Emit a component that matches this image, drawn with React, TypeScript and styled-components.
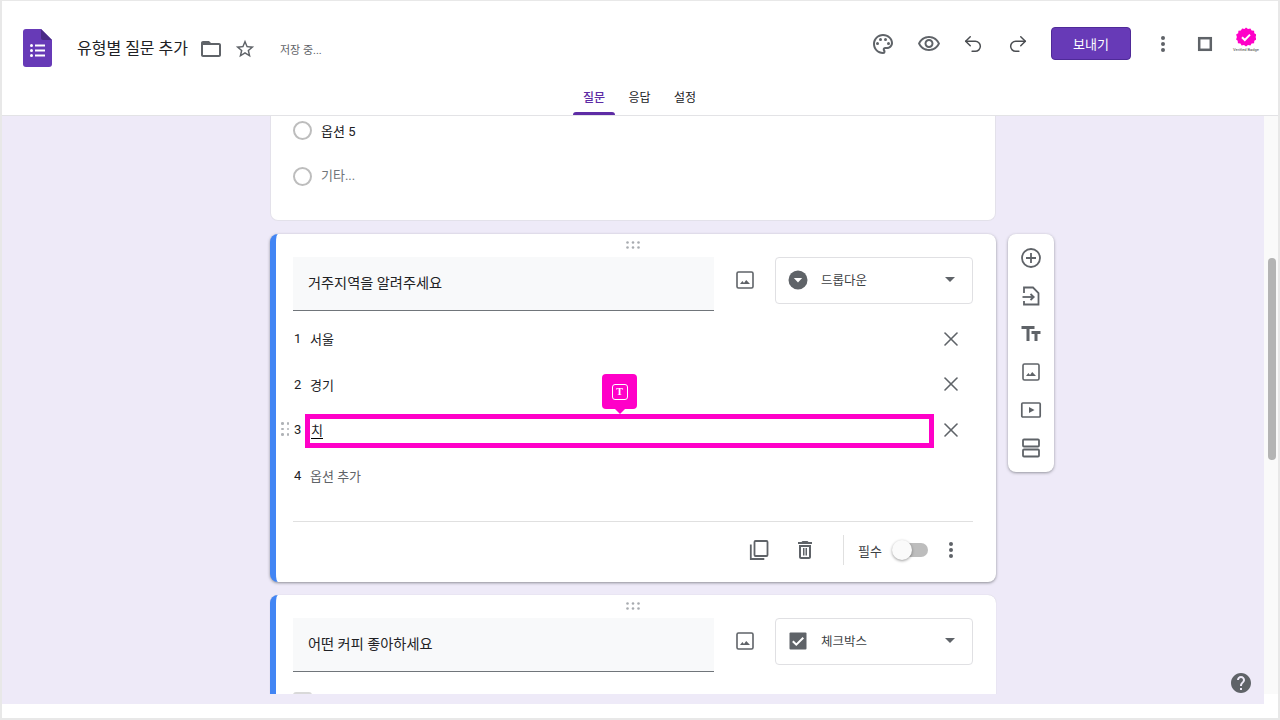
import React from 'react'
import styled, { createGlobalStyle } from 'styled-components'
import { X, Undo2, Redo2 } from 'lucide-react'

const GlobalStyle = createGlobalStyle`
  html, body {
    margin: 0;
    padding: 0;
    background: #fff;
  }
  * {
    box-sizing: border-box;
  }
  body {
    font-family: Roboto, "Noto Sans CJK KR", sans-serif;
    color: #202124;
  }
`

const Page = styled.div`
  width: 1280px;
  height: 720px;
  display: flex;
  flex-direction: column;
  overflow: hidden;
  background: #fff;
  border: 2px solid #e8e8e8;
  border-top-width: 1px;
`
const Header = styled.header`
  flex: 0 0 115px;
  display: flex;
  flex-direction: column;
  background: #fff;
  border-bottom: 1px solid #e3e3e6;
`
const TopRow = styled.div`
  flex: 0 0 84px;
  display: flex;
  align-items: center;
  padding: 0 16px 0 21px;
`
const LeftGroup = styled.div`
  display: flex;
  align-items: center;
  margin-top: 12px;
`
const RightGroup = styled.div`
  display: flex;
  align-items: center;
  margin-top: 1px;
  margin-left: auto;
`
const TitleIcon = styled.svg`
  width: 29px;
  height: 38px;
  flex: none;
  margin-right: 25px;
  margin-bottom: 3px;
`
const DocTitle = styled.div`
  font-size: 16px;
  line-height: 24px;
  color: #202124;
  white-space: nowrap;
  margin-right: 11px;
`
const Saving = styled.div`
  font-size: 11px;
  color: #5f6368;
  margin-left: 23px;
  white-space: nowrap;
`
const HeadIcon = styled.div<{ $w?: number; $ml?: number }>`
  width: ${p => p.$w ?? 24}px;
  height: 24px;
  margin-left: ${p => p.$ml ?? 0}px;
  display: flex;
  align-items: center;
  justify-content: center;
  color: #5f6368;
  flex: none;
  svg {
    display: block;
  }
`
const HistoryIcon = styled(HeadIcon)`
  color: #4a4d51;
`
const SendButton = styled.button`
  width: 80px;
  height: 33px;
  margin-left: 21px;
  background: #673ab7;
  border: 1px solid #4f2a98;
  border-radius: 4px;
  color: #fff;
  font: inherit;
  font-size: 13px;
  padding: 0;
`
const Avatar = styled.div`
  width: 32px;
  margin-left: 13px;
  display: flex;
  flex-direction: column;
  align-items: center;
  margin-top: -8px;
`
const AvatarText = styled.div`
  font-size: 4px;
  line-height: 5px;
  letter-spacing: 0;
  color: #444;
  white-space: nowrap;
`
const TabsRow = styled.nav`
  flex: 1;
  display: flex;
  justify-content: center;
  padding-right: 1px;
`
const Tab = styled.div<{ $active?: boolean }>`
  width: 45.5px;
  height: 100%;
  position: relative;
  text-align: center;
  font-size: 12px;
  line-height: 27px;
  color: ${p => (p.$active ? '#5e2ca5' : '#202124')};
  font-weight: ${p => (p.$active ? 500 : 400)};
  ${p =>
    p.$active &&
    `
    &::after {
      content: '';
      position: absolute;
      left: 2px;
      right: 2px;
      bottom: 0;
      height: 3px;
      border-radius: 3px 3px 0 0;
      background: #5e2ca5;
    }
  `}
`
const Body = styled.div`
  flex: 0 0 588px;
  display: flex;
`
const Canvas = styled.main`
  flex: 1;
  background: #eeeaf8;
  padding-bottom: 10px;
`
const Viewport = styled.div`
  height: 578px;
  overflow: hidden;
  display: grid;
  grid-template-columns: 1fr 726px 1fr;
  column-gap: 12px;
  align-items: start;
`
const Column = styled.div`
  grid-column: 2;
  display: flex;
  flex-direction: column;
`
const Scrollbar = styled.div`
  flex: 0 0 14px;
  height: 578px;
  background: #fafafa;
  padding: 142px 2px 0 4px;
`
const ScrollThumb = styled.div`
  height: 202px;
  border-radius: 4px;
  background: #b4b4b4;
`
const TopCard = styled.section`
  height: 105px;
  overflow: hidden;
  background: #fff;
  border: 1px solid #e3e1ea;
  border-top: none;
  border-radius: 0 0 8px 8px;
  padding-left: 22px;
  margin-bottom: 13px;
`
const RadioList = styled.div`
  margin-top: -9px;
`
const RadioRow = styled.div`
  height: 46px;
  display: flex;
  align-items: center;
  font-size: 13px;
`
const RadioLabel = styled.span<{ $muted?: boolean }>`
  color: ${p => (p.$muted ? '#70757a' : '#202124')};
  margin-bottom: ${p => (p.$muted ? 3 : 0)}px;
`
const RadioCircle = styled.span`
  width: 19px;
  height: 19px;
  border: 2px solid #bdbdbd;
  border-radius: 50%;
  margin-right: 9px;
  flex: none;
`
const Card = styled.section<{ $height: number; $raised?: boolean }>`
  height: ${p => p.$height}px;
  position: relative;
  background: #fff;
  border-left: 6px solid #4285f4;
  border-radius: 8px;
  padding: 0 23px 0 17px;
  box-shadow: ${p =>
    p.$raised
      ? '0 1px 3px rgba(60, 64, 67, 0.55)'
      : '0 0 1px rgba(60, 64, 67, 0.25)'};
  flex: none;
`
const ClippedCard = styled(Card)`
  border-radius: 8px 8px 0 0;
  margin-top: 13px;
`
const DragBar = styled.div`
  height: 23px;
  display: flex;
  justify-content: center;
  padding-top: 7px;
`
const QuestionHead = styled.div`
  display: flex;
  align-items: flex-start;
`
const QuestionField = styled.div`
  width: 421px;
  height: 54px;
  background: #f8f9fa;
  border-bottom: 1px solid #70757a;
  display: flex;
  align-items: center;
  padding-left: 15px;
  padding-bottom: 4px;
  font-size: 14.2px;
  color: #202124;
`
const ImageButton = styled.div`
  width: 61px;
  height: 46px;
  display: flex;
  align-items: center;
  justify-content: center;
  color: #5f6368;
`
const TypeSelect = styled.div`
  width: 198px;
  height: 47px;
  border: 1px solid #e0e0e3;
  border-radius: 4px;
  display: flex;
  align-items: center;
  padding: 0 17px 2px 12px;
  font-size: 12.5px;
  color: #3c4043;
`
const TypeIcon = styled.div`
  width: 20px;
  height: 20px;
  margin-right: 13px;
  flex: none;
`
const TypeLabel = styled.div`
  flex: 1;
`
const Caret = styled.div`
  width: 0;
  height: 0;
  border-left: 5px solid transparent;
  border-right: 5px solid transparent;
  border-top: 5px solid #5f6368;
`
const Options = styled.div`
  margin-top: 5px;
`
const OptionRow = styled.div`
  height: 45.5px;
  position: relative;
  display: flex;
  align-items: center;
  font-size: 13px;
  color: #202124;
`
const OptionNumber = styled.div`
  width: 17px;
  padding-left: 1px;
  font-size: 13px;
`
const OptionText = styled.div<{ $muted?: boolean }>`
  flex: 1;
  font-size: 13px;
  color: ${p => (p.$muted ? '#5f6368' : '#202124')};
`
const RemoveButton = styled.div`
  width: 24px;
  height: 24px;
  margin-right: 10px;
  color: #5f6368;
`
const Typed = styled.span`
  border-bottom: 1px solid #000;
  margin-left: 1px;
  color: #202124;
`
const RowHandle = styled.div`
  position: absolute;
  left: -12px;
  top: 15px;
  display: grid;
  grid-template-columns: repeat(2, 2.5px);
  gap: 3px;
`
const Dot = styled.span`
  width: 2.5px;
  height: 2.5px;
  border-radius: 50%;
  background: #b0b3b7;
`
const Highlight = styled.div`
  position: absolute;
  left: 12px;
  top: 7px;
  width: 629px;
  height: 34px;
  border: 5px solid #ff00c8;
  pointer-events: none;
`
const Bubble = styled.div`
  position: absolute;
  left: 309px;
  top: -33px;
  width: 35px;
  height: 35px;
  background: #ff00c8;
  border-radius: 4px;
  display: flex;
  align-items: center;
  justify-content: center;
  &::after {
    content: '';
    position: absolute;
    left: 13px;
    bottom: -5px;
    border-left: 5px solid transparent;
    border-right: 5px solid transparent;
    border-top: 5px solid #ff00c8;
  }
`
const BubbleIcon = styled.div`
  width: 16px;
  height: 16px;
  border: 1.5px solid #fff;
  border-radius: 3px;
  color: #fff;
  font-family: "Liberation Serif", serif;
  font-weight: 700;
  font-size: 10px;
  line-height: 13px;
  text-align: center;
`
const Divider = styled.div`
  height: 1px;
  margin-top: 23px;
  background: #e0e0e0;
`
const CardFooter = styled.div`
  height: 58px;
  display: flex;
  align-items: center;
  justify-content: flex-end;
  padding: 0 10px 2px 0;
`
const FooterIcon = styled.div`
  width: 24px;
  height: 24px;
  margin-right: 22px;
  color: #5f6368;
`
const VerticalRule = styled.div`
  width: 1px;
  height: 30px;
  margin: 0 14px 0 4px;
  background: #e0e0e0;
`
const RequiredLabel = styled.div`
  font-size: 13px;
  color: #3c4043;
  margin-right: 10px;
`
const Toggle = styled.div`
  width: 36px;
  height: 20px;
  position: relative;
  margin-right: 11px;
  &::before {
    content: '';
    position: absolute;
    left: 3px;
    right: 0;
    top: 3px;
    height: 14px;
    border-radius: 7px;
    background: #bdbdbd;
  }
  &::after {
    content: '';
    position: absolute;
    left: 0;
    top: 0;
    width: 20px;
    height: 20px;
    border-radius: 50%;
    background: #fafafa;
    box-shadow: 0 1px 3px rgba(0, 0, 0, 0.4);
  }
`
const MoreIcon = styled.div`
  width: 24px;
  height: 24px;
  color: #5f6368;
`
const GhostCheckbox = styled.div`
  width: 19px;
  height: 19px;
  margin-top: 20px;
  border-radius: 3px;
  background: #d9d9d9;
`
const SideToolbar = styled.aside`
  grid-column: 3;
  justify-self: start;
  width: 46px;
  height: 238px;
  margin-top: 118px;
  padding: 5px 0;
  background: #fff;
  border-radius: 8px;
  box-shadow: 0 1px 3px rgba(60, 64, 67, 0.5);
  display: flex;
  flex-direction: column;
  align-items: center;
`
const ToolButton = styled.div`
  flex: 0 0 38px;
  display: flex;
  align-items: center;
  justify-content: center;
  color: #5f6368;
`
const BottomStrip = styled.div`
  flex: 1;
  background: #fff;
`
const HelpFab = styled.svg`
  position: fixed;
  left: 1229px;
  top: 671px;
  width: 24px;
  height: 24px;
  color: #5f6368;
`

type IconProps = { size?: number }

const Svg = ({ size = 24, children }: IconProps & { children: React.ReactNode }) => (
  <svg width={size} height={size} viewBox="0 0 24 24" fill="currentColor">
    {children}
  </svg>
)

const FormsLogo = () => (
  <TitleIcon viewBox="0 0 29 38">
    <path d="M18 0H3a3 3 0 0 0-3 3v32a3 3 0 0 0 3 3h23a3 3 0 0 0 3-3V11z" fill="#673ab7" />
    <path d="M18 0l11 11H20a2 2 0 0 1-2-2z" fill="#4a2a86" />
    <g fill="#fff">
      <circle cx="8.5" cy="16.5" r="1.5" />
      <circle cx="8.5" cy="21.5" r="1.5" />
      <circle cx="8.5" cy="26.5" r="1.5" />
      <rect x="12" y="15.5" width="10" height="2" />
      <rect x="12" y="20.5" width="10" height="2" />
      <rect x="12" y="25.5" width="10" height="2" />
    </g>
  </TitleIcon>
)
const FolderIcon = () => (
  <Svg>
    <path d="M20 6h-8l-2-2H4c-1.1 0-1.99.9-1.99 2L2 18c0 1.1.9 2 2 2h16c1.1 0 2-.9 2-2V8c0-1.1-.9-2-2-2zm0 12H4V8h16v10z" />
  </Svg>
)
const StarIcon = () => (
  <Svg size={22}>
    <path d="M22 9.24l-7.19-.62L12 2 9.19 8.63 2 9.24l5.46 4.73L5.82 21 12 17.27 18.18 21l-1.63-7.03L22 9.24zM12 15.4l-3.76 2.27 1-4.28-3.32-2.88 4.38-.38L12 6.1l1.71 4.04 4.38.38-3.32 2.88 1 4.28L12 15.4z" />
  </Svg>
)
const PaletteIcon = () => (
  <Svg>
    <path d="M12 22C6.49 22 2 17.51 2 12S6.49 2 12 2s10 4.04 10 9c0 3.31-2.69 6-6 6h-1.77c-.28 0-.5.22-.5.5 0 .12.05.23.13.33.41.47.64 1.06.64 1.67A2.5 2.5 0 0 1 12 22zm0-18c-4.41 0-8 3.59-8 8s3.59 8 8 8c.28 0 .5-.22.5-.5a.54.54 0 0 0-.14-.35c-.41-.46-.63-1.05-.63-1.65a2.5 2.5 0 0 1 2.5-2.5H16c2.21 0 4-1.79 4-4 0-3.86-3.59-7-8-7z" />
    <circle cx="6.5" cy="11.5" r="1.5" />
    <circle cx="9.5" cy="7.5" r="1.5" />
    <circle cx="14.5" cy="7.5" r="1.5" />
    <circle cx="17.5" cy="11.5" r="1.5" />
  </Svg>
)
const EyeIcon = () => (
  <Svg>
    <path d="M12 6c3.79 0 7.17 2.13 8.82 5.5C19.17 14.87 15.79 17 12 17s-7.17-2.13-8.82-5.5C4.83 8.13 8.21 6 12 6m0-2C7 4 2.73 7.11 1 11.5 2.73 15.89 7 19 12 19s9.27-3.11 11-7.5C21.27 7.11 17 4 12 4zm0 5c1.38 0 2.5 1.12 2.5 2.5S13.38 14 12 14s-2.5-1.12-2.5-2.5S10.62 9 12 9m0-2c-2.48 0-4.5 2.02-4.5 4.5S9.52 16 12 16s4.5-2.02 4.5-4.5S14.48 7 12 7z" />
  </Svg>
)
const KebabIcon = () => (
  <Svg>
    <circle cx="12" cy="6" r="2" />
    <circle cx="12" cy="12" r="2" />
    <circle cx="12" cy="18" r="2" />
  </Svg>
)
const SquareIcon = () => (
  <svg width="24" height="24" viewBox="0 0 24 24" fill="none" stroke="currentColor" strokeWidth="2.5">
    <rect x="6.2" y="6.2" width="11.6" height="11.6" />
  </svg>
)
const Badge = () => (
  <svg width="20" height="20" viewBox="0 0 20 20">
    <path
      fill="#ff00c8"
      d="M10 .6l2 1.5 2.4-.7 1.2 2.2 2.5.2.2 2.5 2.1 1.3-.8 2.4.8 2.4-2.1 1.3-.2 2.5-2.5.2-1.2 2.2-2.4-.7-2 1.5-2-1.5-2.4.7-1.2-2.2-2.5-.2-.2-2.5L.1 12.4l.8-2.4-.8-2.4 2.1-1.3.2-2.5 2.5-.2 1.2-2.2 2.4.7z"
    />
    <path d="M6 10.2l2.8 2.8L14 7.6" fill="none" stroke="#fff" strokeWidth="2" />
  </svg>
)
const ImageIcon = () => (
  <svg width="24" height="24" viewBox="0 0 24 24" fill="none">
    <rect x="4" y="4" width="16" height="16" rx="1.5" stroke="currentColor" strokeWidth="1.6" />
    <path d="M7 16l2.4-3 1.6 2 2.2-3 3.8 4z" fill="currentColor" />
  </svg>
)
const DropdownGlyph = () => (
  <svg width="20" height="20" viewBox="0 0 20 20">
    <circle cx="10" cy="10" r="9.5" fill="#5f6368" />
    <path d="M5.8 8h8.4L10 12.6z" fill="#fff" />
  </svg>
)
const CheckboxGlyph = () => (
  <svg width="20" height="20" viewBox="0 0 20 20">
    <rect x="1.5" y="1.5" width="17" height="17" rx="1" fill="#5f6368" />
    <path d="M4.8 10.2l3.5 3.5 7-7" fill="none" stroke="#fff" strokeWidth="2" />
  </svg>
)
const DragDots = () => (
  <svg width="14" height="8" viewBox="0 0 14 8" fill="#a8abb0">
    <circle cx="1.5" cy="1.5" r="1.3" />
    <circle cx="7" cy="1.5" r="1.3" />
    <circle cx="12.5" cy="1.5" r="1.3" />
    <circle cx="1.5" cy="6.5" r="1.3" />
    <circle cx="7" cy="6.5" r="1.3" />
    <circle cx="12.5" cy="6.5" r="1.3" />
  </svg>
)
const CopyIcon = () => (
  <svg width="24" height="24" viewBox="0 0 24 24" fill="none" stroke="currentColor" strokeWidth="1.8">
    <rect x="7.5" y="3" width="13" height="15" rx="1" />
    <path d="M3.8 6.5V21h13.5" />
  </svg>
)
const TrashIcon = () => (
  <Svg>
    <path d="M16 9v10H8V9h8m-1.5-6h-5l-1 1H5v2h14V4h-3.5l-1-1zM18 7H6v12c0 1.1.9 2 2 2h8c1.1 0 2-.9 2-2V7z" />
    <rect x="10" y="10" width="1.5" height="7.5" />
    <rect x="12.5" y="10" width="1.5" height="7.5" />
  </Svg>
)
const AddCircleIcon = () => (
  <svg width="24" height="24" viewBox="0 0 24 24" fill="none" stroke="currentColor" strokeWidth="1.8">
    <circle cx="12" cy="12" r="9" />
    <path d="M12 7v10M7 12h10" />
  </svg>
)
const ImportIcon = () => (
  <svg width="24" height="24" viewBox="0 0 24 24" fill="none" stroke="currentColor" strokeWidth="1.8">
    <path d="M5 9V3.5h9l5.5 5.5v11.5H5V17" />
    <path d="M3.5 13h11" />
    <path d="M11.5 10l3.2 3-3.2 3" />
  </svg>
)
const TitleTextIcon = () => (
  <Svg>
    <path d="M2.5 4v3h5v12h3V7h5V4h-13zm19 5h-9v3h3v7h3v-7h3V9z" />
  </Svg>
)
const VideoIcon = () => (
  <svg width="24" height="24" viewBox="0 0 24 24" fill="none">
    <rect x="2.8" y="5" width="18.4" height="14" rx="1" stroke="currentColor" strokeWidth="1.7" />
    <path d="M10 9l5.5 3-5.5 3z" fill="currentColor" />
  </svg>
)
const SectionIcon = () => (
  <svg width="24" height="24" viewBox="0 0 24 24" fill="none" stroke="currentColor" strokeWidth="1.8">
    <rect x="4" y="3.5" width="16" height="7" rx="1" />
    <rect x="4" y="13.5" width="16" height="7" rx="1" />
  </svg>
)

const QuestionTop = ({ title, glyph, type }: { title: string; glyph: React.ReactNode; type: string }) => (
  <>
    <DragBar>
      <DragDots />
    </DragBar>
    <QuestionHead>
      <QuestionField>{title}</QuestionField>
      <ImageButton>
        <ImageIcon />
      </ImageButton>
      <TypeSelect>
        <TypeIcon>{glyph}</TypeIcon>
        <TypeLabel>{type}</TypeLabel>
        <Caret />
      </TypeSelect>
    </QuestionHead>
  </>
)

const App = () => {
  return (
    <Page>
      <GlobalStyle />
      <Header>
        <TopRow>
          <LeftGroup>
            <FormsLogo />
            <DocTitle>유형별 질문 추가</DocTitle>
            <HeadIcon>
              <FolderIcon />
            </HeadIcon>
            <HeadIcon $ml={10}>
              <StarIcon />
            </HeadIcon>
            <Saving>저장 중...</Saving>
          </LeftGroup>
          <RightGroup>
            <HeadIcon>
              <PaletteIcon />
            </HeadIcon>
            <HeadIcon $ml={22}>
              <EyeIcon />
            </HeadIcon>
            <HistoryIcon $ml={20}>
              <Undo2 size={22} strokeWidth={1.6} />
            </HistoryIcon>
            <HistoryIcon $ml={21}>
              <Redo2 size={22} strokeWidth={1.6} />
            </HistoryIcon>
            <SendButton>보내기</SendButton>
            <HeadIcon $ml={20}>
              <KebabIcon />
            </HeadIcon>
            <HeadIcon $ml={18}>
              <SquareIcon />
            </HeadIcon>
            <Avatar>
              <Badge />
              <AvatarText>Verified Badge</AvatarText>
            </Avatar>
          </RightGroup>
        </TopRow>
        <TabsRow>
          <Tab $active>질문</Tab>
          <Tab>응답</Tab>
          <Tab>설정</Tab>
        </TabsRow>
      </Header>
      <Body>
        <Canvas>
          <Viewport>
            <Column>
              <TopCard>
                <RadioList>
                  <RadioRow>
                    <RadioCircle />
                    <RadioLabel>옵션 5</RadioLabel>
                  </RadioRow>
                  <RadioRow>
                    <RadioCircle />
                    <RadioLabel $muted>기타...</RadioLabel>
                  </RadioRow>
                </RadioList>
              </TopCard>
              <Card $height={348} $raised>
                <QuestionTop title="거주지역을 알려주세요" glyph={<DropdownGlyph />} type="드롭다운" />
                <Options>
                  <OptionRow>
                    <OptionNumber>1</OptionNumber>
                    <OptionText>서울</OptionText>
                    <RemoveButton>
                      <X size={24} strokeWidth={1.6} />
                    </RemoveButton>
                  </OptionRow>
                  <OptionRow>
                    <OptionNumber>2</OptionNumber>
                    <OptionText>경기</OptionText>
                    <RemoveButton>
                      <X size={24} strokeWidth={1.6} />
                    </RemoveButton>
                  </OptionRow>
                  <OptionRow>
                    <RowHandle>
                      <Dot />
                      <Dot />
                      <Dot />
                      <Dot />
                      <Dot />
                      <Dot />
                    </RowHandle>
                    <OptionNumber>3</OptionNumber>
                    <OptionText>
                      <Typed>치</Typed>
                    </OptionText>
                    <RemoveButton>
                      <X size={24} strokeWidth={1.6} />
                    </RemoveButton>
                    <Highlight />
                    <Bubble>
                      <BubbleIcon>T</BubbleIcon>
                    </Bubble>
                  </OptionRow>
                  <OptionRow>
                    <OptionNumber>4</OptionNumber>
                    <OptionText $muted>옵션 추가</OptionText>
                  </OptionRow>
                </Options>
                <Divider />
                <CardFooter>
                  <FooterIcon>
                    <CopyIcon />
                  </FooterIcon>
                  <FooterIcon>
                    <TrashIcon />
                  </FooterIcon>
                  <VerticalRule />
                  <RequiredLabel>필수</RequiredLabel>
                  <Toggle />
                  <MoreIcon>
                    <KebabIcon />
                  </MoreIcon>
                </CardFooter>
              </Card>
              <ClippedCard $height={120}>
                <QuestionTop title="어떤 커피 좋아하세요" glyph={<CheckboxGlyph />} type="체크박스" />
                <GhostCheckbox />
              </ClippedCard>
            </Column>
            <SideToolbar>
              <ToolButton>
                <AddCircleIcon />
              </ToolButton>
              <ToolButton>
                <ImportIcon />
              </ToolButton>
              <ToolButton>
                <TitleTextIcon />
              </ToolButton>
              <ToolButton>
                <ImageIcon />
              </ToolButton>
              <ToolButton>
                <VideoIcon />
              </ToolButton>
              <ToolButton>
                <SectionIcon />
              </ToolButton>
            </SideToolbar>
          </Viewport>
        </Canvas>
        <Scrollbar>
          <ScrollThumb />
        </Scrollbar>
      </Body>
      <BottomStrip />
      <HelpFab viewBox="0 0 24 24" fill="currentColor">
        <path d="M12 2C6.48 2 2 6.48 2 12s4.48 10 10 10 10-4.48 10-10S17.52 2 12 2zm1 17h-2v-2h2v2zm2.07-7.75l-.9.92C13.45 12.9 13 13.5 13 15h-2v-.5c0-1.1.45-2.1 1.17-2.83l1.24-1.26c.37-.36.59-.86.59-1.41 0-1.1-.9-2-2-2s-2 .9-2 2H8c0-2.21 1.79-4 4-4s4 1.79 4 4c0 .88-.36 1.68-.93 2.25z" />
      </HelpFab>
    </Page>
  )
}

export default App
